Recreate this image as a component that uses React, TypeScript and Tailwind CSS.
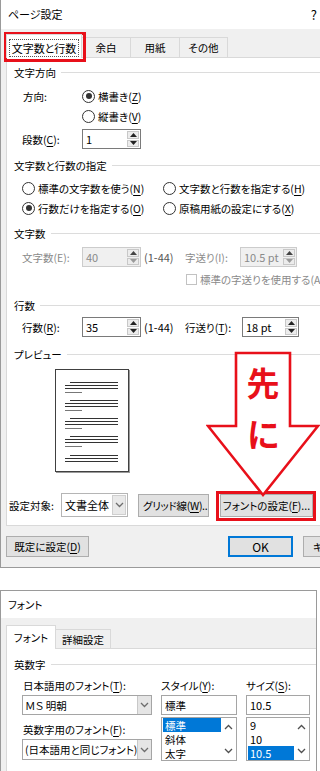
import React from "react";

const U = ({ c }: { c: string }) => (
  <span className="underline underline-offset-[2px] decoration-1">{c}</span>
);

function Radio({ checked }: { checked?: boolean }) {
  return (
    <span className="w-[13px] h-[13px] rounded-full border border-[#333333] bg-white flex items-center justify-center shrink-0">
      {checked && <span className="w-[6px] h-[6px] rounded-full bg-[#333333]" />}
    </span>
  );
}

function Group({ label }: { label: string }) {
  return (
    <div className="flex items-center h-[20px] pl-[7px]">
      <span>{label}</span>
      <span className="flex-1 h-px bg-[#dcdcdc] ml-[5px]" />
    </div>
  );
}

function Tri({ up, color }: { up?: boolean; color: string }) {
  return (
    <svg width="7" height="4" viewBox="0 0 7 4">
      {up ? <polygon points="0,4 7,4 3.5,0" fill={color} /> : <polygon points="0,0 7,0 3.5,4" fill={color} />}
    </svg>
  );
}

function Spin({ value, w, disabled }: { value: string; w: string; disabled?: boolean }) {
  return (
    <div
      className={`flex h-[20px] border ${w} ${
        disabled ? "border-[#cccccc] bg-[#f0f0f0] text-[#8a8a8a]" : "border-[#7a7a7a] bg-white text-black"
      }`}
    >
      <div className="flex-1 pl-[3px] flex items-center text-[11px]">{value}</div>
      <div className="w-[14px] flex flex-col gap-px p-px">
        <div className="flex-1 bg-[#ececec] border border-[#c8c8c8] flex items-center justify-center">
          <Tri up color={disabled ? "#444444" : "#222222"} />
        </div>
        <div className="flex-1 bg-[#ececec] border border-[#c8c8c8] flex items-center justify-center">
          <Tri color={disabled ? "#9a9a9a" : "#222222"} />
        </div>
      </div>
    </div>
  );
}

function Chev({ up, color = "#6d6d6d" }: { up?: boolean; color?: string }) {
  return (
    <svg width="9" height="6" viewBox="0 0 9 6">
      {up ? (
        <polyline points="1,5 4.5,1.5 8,5" fill="none" stroke={color} strokeWidth="1.3" />
      ) : (
        <polyline points="1,1 4.5,4.5 8,1" fill="none" stroke={color} strokeWidth="1.3" />
      )}
    </svg>
  );
}

function Combo({ value, h }: { value: string; h: string }) {
  return (
    <div className={`flex w-[130px] ${h} border border-[#a5a5a5] bg-white`}>
      <div className="flex-1 flex items-center pl-[2px] whitespace-nowrap overflow-hidden">{value}</div>
      <div className="w-[14px] bg-[#e5e5e5] border-l border-[#c8c8c8] flex items-center justify-center">
        <Chev />
      </div>
    </div>
  );
}

function PagePreview() {
  const groups = [12, 30, 48, 66];
  return (
    <div className="ml-[48px] mt-[5px] w-[74px] h-[103px] border border-[#404040] bg-white shadow-[1px_1px_0_#9a9a9a]">
      <svg width="72" height="101" viewBox="0 0 72 101">
        {groups.map((y) => (
          <g key={y}>
            <line x1="14" x2="62" y1={y + 0.5} y2={y + 0.5} stroke="#333" strokeWidth="1" />
            <line x1="9" x2="62" y1={y + 3.5} y2={y + 3.5} stroke="#333" strokeWidth="1" />
            <line x1="9" x2="62" y1={y + 6.5} y2={y + 6.5} stroke="#333" strokeWidth="1" />
            <line x1="9" x2="26" y1={y + 10.5} y2={y + 10.5} stroke="#777" strokeWidth="1" />
          </g>
        ))}
        <line x1="14" x2="62" y1={85.5} y2={85.5} stroke="#333" strokeWidth="1" />
        <line x1="9" x2="62" y1={88.5} y2={88.5} stroke="#333" strokeWidth="1" />
        <line x1="9" x2="62" y1={91.5} y2={91.5} stroke="#333" strokeWidth="1" />
      </svg>
    </div>
  );
}

export default function App() {
  return (
    <div className="relative w-[320px] h-[771px] overflow-hidden bg-white text-black text-[10.5px] leading-[13px] font-['Noto_Sans_CJK_JP',sans-serif] [font-feature-settings:'palt']">
      {/* Dialog 1 */}
      <div className="h-[568px] border-l border-b border-[#9a9a9a] bg-[#f0f0f0] flex flex-col overflow-hidden">
        <div className="h-[29px] bg-white flex items-center justify-between pl-[7px] pr-[3px] shrink-0">
          <span className="text-[11px]">ページ設定</span>
          <span className="text-[13px]">?</span>
        </div>
        <div className="h-[28px] flex items-end pl-[5px] shrink-0">
          <div className="relative z-10 -mb-px w-[76px] h-[24px] bg-white border border-b-0 border-[#d9d9d9] flex items-center justify-center">
            <span className="border border-dotted border-[#555] px-[2px] h-[18px] flex items-center mt-[3px] text-[11px]">文字数と行数</span>
          </div>
          <div className="w-[49px] h-[20px] border-t border-r border-[#d9d9d9] bg-[#f0f0f0] flex items-center justify-center">余白</div>
          <div className="w-[49px] h-[20px] border-t border-r border-[#d9d9d9] bg-[#f0f0f0] flex items-center justify-center">用紙</div>
          <div className="w-[48px] h-[20px] border-t border-r border-[#d9d9d9] bg-[#f0f0f0] flex items-center justify-center">その他</div>
        </div>
        <div className="ml-[5px] h-[469px] shrink-0 bg-white border-l border-t border-b border-[#d9d9d9] flex flex-col">
          <div className="mt-[4px]">
            <Group label="文字方向" />
          </div>
          <div className="mt-[4px] h-[20px] flex items-center pl-[16px]">
            <span className="w-[59px]">方向:</span>
            <Radio checked />
            <span className="ml-[3px]">
              横書き(<U c="Z" />)
            </span>
          </div>
          <div className="h-[20px] flex items-center pl-[75px]">
            <Radio />
            <span className="ml-[3px]">
              縦書き(<U c="V" />)
            </span>
          </div>
          <div className="mt-[3px] h-[20px] flex items-center pl-[15px]">
            <span className="w-[60px]">
              段数(<U c="C" />):
            </span>
            <Spin value="1" w="w-[59px]" />
          </div>
          <div className="mt-[6px]">
            <Group label="文字数と行数の指定" />
          </div>
          <div className="mt-[3px] h-[20px] flex items-center pl-[15px]">
            <div className="w-[141px] flex items-center">
              <Radio />
              <span className="ml-[3px]">
                標準の文字数を使う(<U c="N" />)
              </span>
            </div>
            <Radio />
            <span className="ml-[3px]">
              文字数と行数を指定する(<U c="H" />)
            </span>
          </div>
          <div className="h-[20px] flex items-center pl-[15px]">
            <div className="w-[141px] flex items-center">
              <Radio checked />
              <span className="ml-[3px]">
                行数だけを指定する(<U c="O" />)
              </span>
            </div>
            <Radio />
            <span className="ml-[3px]">
              原稿用紙の設定にする(<U c="X" />)
            </span>
          </div>
          <div className="mt-[5px]">
            <Group label="文字数" />
          </div>
          <div className="mt-[4px] h-[20px] flex items-center pl-[15px] text-[#8a8a8a] whitespace-nowrap">
            <span className="w-[60px]">文字数(E):</span>
            <Spin value="40" w="w-[59px]" disabled />
            <span className="w-[44px] pl-[3px] text-[#555555] text-[11px]">(1-44)</span>
            <span className="w-[55px]">字送り(I):</span>
            <Spin value="10.5 pt" w="w-[57px]" disabled />
          </div>
          <div className="mt-[2px] h-[20px] flex items-center pl-[179px] text-[#8a8a8a] whitespace-nowrap">
            <span className="w-[11px] h-[11px] border border-[#c2c2c2] bg-white shrink-0" />
            <span className="ml-[3px]">標準の字送りを使用する(A)</span>
          </div>
          <div className="mt-[6px]">
            <Group label="行数" />
          </div>
          <div className="mt-[2px] h-[20px] flex items-center pl-[15px] whitespace-nowrap">
            <span className="w-[60px]">
              行数(<U c="R" />):
            </span>
            <Spin value="35" w="w-[59px]" />
            <span className="w-[44px] pl-[3px] text-[11px]">(1-44)</span>
            <span className="w-[57px]">
              行送り(<U c="T" />):
            </span>
            <Spin value="18 pt" w="w-[57px]" />
          </div>
          <div className="mt-[7px]">
            <Group label="プレビュー" />
          </div>
          <PagePreview />
          <div className="mt-[21px] h-[24px] flex items-center pl-[2px] whitespace-nowrap">
            <span className="w-[52px]">設定対象:</span>
            <div className="flex w-[67px] h-[24px] border border-[#b5b5b5] bg-white">
              <div className="flex-1 flex items-center pl-[3px] text-[11px]">文書全体</div>
              <div className="w-[14px] my-px mr-px bg-[#e9e9e9] border border-[#cfcfcf] flex items-center justify-center">
                <Chev />
              </div>
            </div>
            <div className="ml-[10px] w-[71px] h-[23px] bg-[#e1e1e1] border border-[#adadad] flex items-center pl-[4px] overflow-hidden tracking-[-0.3px]">
              グリッド線(<U c="W" />)..
            </div>
            <div className="ml-[11px] w-[93px] h-[23px] bg-[#e1e1e1] border border-[#adadad] flex items-center justify-center">
              フォントの設定(<U c="F" />)...
            </div>
          </div>
        </div>
        <div className="mt-[10px] flex items-center pl-[5px] whitespace-nowrap">
          <div className="w-[83px] h-[21px] shrink-0 bg-[#e1e1e1] border border-[#adadad] flex items-center justify-center">
            既定に設定(<U c="D" />)
          </div>
          <div className="ml-[139px] w-[65px] h-[21px] shrink-0 bg-[#e1e1e1] border border-[#0078d7] shadow-[inset_0_0_0_1px_#0078d7] flex items-center justify-center text-[12px]">
            OK
          </div>
          <div className="ml-[10px] w-[75px] h-[21px] shrink-0 bg-[#e1e1e1] border border-[#adadad] flex items-center pl-[9px]">
            キャンセル
          </div>
        </div>
      </div>

      {/* Dialog 2 */}
      <div className="mt-[22px] w-[317px] h-[181px] border-t border-l border-r border-[#9a9a9a] bg-[#f0f0f0] flex flex-col overflow-hidden">
        <div className="h-[27px] bg-white flex items-center pl-[7px] shrink-0">フォント</div>
        <div className="h-[30px] flex items-end pl-[5px] shrink-0">
          <div className="relative z-10 -mb-px w-[50px] h-[24px] bg-white border border-b-0 border-[#d9d9d9] flex items-center justify-center">
            フォント
          </div>
          <div className="w-[55px] h-[19px] border-t border-r border-[#d9d9d9] bg-[#f0f0f0] flex items-center justify-center">
            詳細設定
          </div>
        </div>
        <div className="ml-[5px] flex-1 bg-white border-l border-t border-[#d9d9d9] flex flex-col">
          <div className="mt-[5px]">
            <Group label="英数字" />
          </div>
          <div className="mt-[1px] flex pl-[15px] whitespace-nowrap">
            <div className="w-[130px] flex flex-col">
              <div className="h-[20px] flex items-center pl-px">
                日本語用のフォント(<U c="T" />):
              </div>
              <Combo value="ＭＳ 明朝" h="h-[20px]" />
              <div className="mt-[4px] h-[20px] flex items-center pl-px">
                英数字用のフォント(<U c="F" />):
              </div>
              <Combo value="(日本語用と同じフォント)" h="h-[21px]" />
            </div>
            <div className="ml-[9px] w-[76px] flex flex-col">
              <div className="h-[20px] flex items-center">
                スタイル(<U c="Y" />):
              </div>
              <div className="h-[20px] border border-[#a5a5a5] bg-white flex items-center pl-[3px]">標準</div>
              <div className="mt-[2px] h-[44px] border border-[#a5a5a5] bg-white flex leading-[13px]">
                <div className="flex-1 flex flex-col">
                  <div className="h-[14px] bg-[#0078d7] text-white flex items-center pl-[2px] ml-px">標準</div>
                  <div className="h-[14px] flex items-center pl-[3px]">斜体</div>
                  <div className="h-[14px] flex items-center pl-[3px]">太字</div>
                </div>
                <div className="w-[15px] flex flex-col items-center justify-between py-[6px]">
                  <Chev up color="#505050" />
                  <Chev color="#505050" />
                </div>
              </div>
            </div>
            <div className="ml-[9px] w-[64px] flex flex-col">
              <div className="h-[20px] flex items-center">
                サイズ(<U c="S" />):
              </div>
              <div className="h-[20px] border border-[#a5a5a5] bg-white flex items-center pl-[3px] text-[11px]">10.5</div>
              <div className="mt-[2px] h-[44px] border border-[#a5a5a5] bg-white flex leading-[13px] text-[11px]">
                <div className="flex-1 flex flex-col">
                  <div className="h-[14px] flex items-center pl-[3px]">9</div>
                  <div className="h-[14px] flex items-center pl-[3px]">10</div>
                  <div className="h-[14px] bg-[#0078d7] text-white flex items-center pl-[2px] ml-px">10.5</div>
                </div>
                <div className="w-[15px] flex flex-col items-center justify-between py-[6px]">
                  <Chev up color="#505050" />
                  <Chev color="#505050" />
                </div>
              </div>
            </div>
          </div>
        </div>
      </div>

      {/* Red overlays */}
      <div className="absolute left-[4px] top-[32px] w-[82px] h-[30px] border-[3px] border-[#e8101a]" />
      <div className="absolute left-[216px] top-[491px] w-[100px] h-[30px] border-[3px] border-[#e8101a]" />
      <svg className="absolute left-[206px] top-[351px]" width="114" height="148" viewBox="0 0 114 148">
        <polygon
          points="30,2 84,2 84,75 112,75 57,144 2,75 30,75"
          fill="white"
          stroke="#e8101a"
          strokeWidth="2.6"
          strokeLinejoin="miter"
        />
        <text x="57" y="45" textAnchor="middle" fontSize="33" fontWeight="700" fill="#e8101a" fontFamily="Noto Sans CJK JP, sans-serif">
          先
        </text>
        <text x="57" y="96" textAnchor="middle" fontSize="33" fontWeight="700" fill="#e8101a" fontFamily="Noto Sans CJK JP, sans-serif">
          に
        </text>
      </svg>
    </div>
  );
}
